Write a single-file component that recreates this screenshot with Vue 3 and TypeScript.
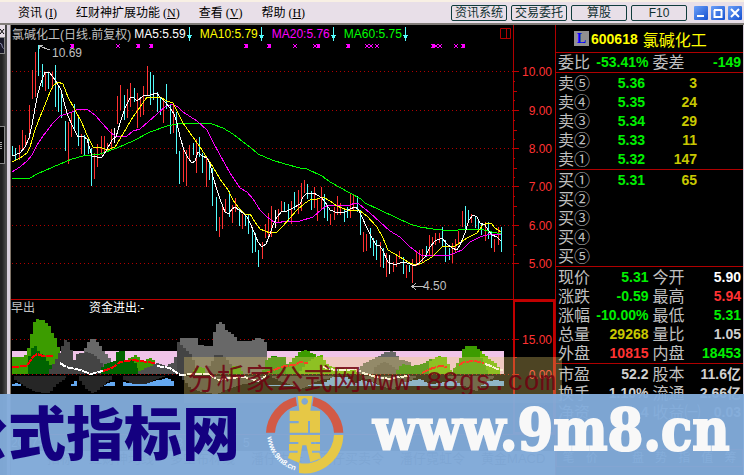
<script setup lang="ts">
type Point = [number, number]

interface Area {
  fill: string
  base: number
  points: string
}

const menus = [
  { label: '资讯', key: 'I' },
  { label: '红财神扩展功能', key: 'N' },
  { label: '查看', key: 'V' },
  { label: '帮助', key: 'H' },
]
const shortcuts = ['资讯系统', '交易委托', '算股', 'F10']

const averages = [
  { text: 'MA5:5.59', tone: 'white' },
  { text: 'MA10:5.79', tone: 'yellow' },
  { text: 'MA20:5.76', tone: 'magenta' },
  { text: 'MA60:5.75', tone: 'lime' },
]

// Price bars: x, high, low, colour (r = up, c = down, w = flat)
const barData =
  '12,146,155,c 15,148,160,c 19,145,160,r 22,130,150,r 25,135,147,r 29,105,139,r 32,70,99,r 35,52,97,r 38,45,76,c ' +
  '42,64,87,c 45,72,91,r 48,73,89,c 52,72,89,r 55,65,107,c 58,85,112,c 61,91,118,c 65,121,151,c 68,122,164,r ' +
  '71,112,137,r 74,104,130,c 78,117,146,c 81,134,154,r 84,135,156,c 88,137,154,c 91,148,186,c 94,153,179,r ' +
  '97,144,167,r 101,136,155,r 104,136,152,r 107,143,152,r 111,129,148,r 114,128,143,w 117,96,124,r 120,85,110,r ' +
  '124,95,120,c 127,89,118,r 130,83,107,r 134,88,102,c 137,93,128,r 140,97,117,r 143,86,115,r 147,66,96,r ' +
  '150,72,105,c 153,75,100,c 157,92,112,c 160,97,115,c 163,100,123,r 166,84,109,c 170,105,134,c 173,105,133,r ' +
  '176,112,154,c 179,151,184,c 183,150,182,r 186,150,186,r 189,145,160,r 193,143,155,c 196,139,173,r 199,137,157,c ' +
  '202,153,173,c 206,157,187,r 209,161,180,c 212,168,206,c 216,197,231,c 219,217,237,r 222,204,229,r 225,199,213,r ' +
  '229,191,217,c 232,205,223,r 235,198,212,r 239,209,226,c 242,214,229,r 245,214,226,c 248,215,234,c 252,228,253,c ' +
  '255,233,252,c 258,250,267,c 262,242,259,r 265,224,238,r 268,213,238,r 271,206,237,r 275,210,228,w 278,209,223,r ' +
  '281,201,212,r 284,202,212,c 288,204,222,c 291,201,224,r 294,192,210,c 298,190,214,r 301,183,211,r 304,180,193,r ' +
  '307,184,199,c 311,191,210,c 314,187,208,r 317,198,221,r 321,187,210,r 324,194,218,c 327,206,221,c 330,214,225,r ' +
  '334,207,220,r 337,196,215,r 340,203,215,r 344,210,222,c 347,207,218,c 350,193,218,r 353,195,210,r 357,196,212,c ' +
  '360,210,235,c 363,232,252,r 366,234,251,r 370,228,248,c 373,238,256,c 376,240,260,c 380,242,267,r 383,248,268,c ' +
  '386,253,277,r 389,255,274,w 393,262,272,r 396,255,267,r 399,251,259,r 403,257,274,c 406,265,278,r 409,265,272,c ' +
  '412,259,283,r 416,252,266,r 419,250,265,r 422,249,262,r 426,246,257,c 429,235,255,r 432,237,257,r 435,233,245,r ' +
  '439,233,243,r 442,227,246,c 445,240,262,c 449,248,260,c 452,243,263,r 455,239,253,r 458,231,245,r 462,211,227,r ' +
  '465,206,233,c 468,210,220,c 471,214,223,r 475,216,228,c 478,219,230,c 481,223,235,c 485,222,241,r 488,222,239,c ' +
  '491,232,248,c 494,239,252,r 498,227,245,r 501,227,252,c'

const barFill: Record<string, string> = { r: '#ff3232', c: '#54fcfc', w: '#ffffff' }
const bars = barData.split(' ').map((entry) => {
  const [x, high, low, kind] = entry.split(',')
  return { x: Number(x), high: Number(high), size: Number(low) - Number(high), fill: barFill[kind] }
})

const priceLines = [
  {
    stroke: '#00ff00',
    points:
      '12,178 25,179 30,178 37,174 53,167 72,159 83,156 100,154 117,148 133,141 150,132 167,126 182,123 200,123 212,124 223,128 233,134 247,145 250,147 258,154 272,160 285,164 300,168 307,169 322,176 330,182 350,193 361,199 365,203 380,210 397,218 410,224 420,227 433,229 450,231 467,229 480,229 488,231 501,234',
  },
  {
    stroke: '#ff00ff',
    points:
      '12,172 20,167 27,161 32,155 37,145 43,136 53,123 60,116 72,112 78,109 87,109 95,115 102,123 110,132 115,136 126,137 133,131 140,129 148,122 157,114 165,107 172,104 178,107 183,112 197,121 207,130 213,142 220,155 230,173 240,188 247,192 253,199 260,210 267,217 274,222 278,223 285,221 300,221 313,217 322,209 328,205 350,205 355,203 359,204 370,213 380,222 390,231 400,237 410,247 417,252 422,256 450,255 462,250 470,242 480,237 490,234 501,234',
  },
  {
    stroke: '#ffff00',
    points:
      '12,162 20,158 27,153 30,147 35,130 40,117 45,105 50,92 53,86 58,82 63,84 68,97 75,110 82,123 87,135 93,147 100,147 107,150 115,147 120,139 127,127 133,117 140,107 147,97 160,97 167,101 173,103 178,113 183,123 190,133 200,147 207,158 213,167 220,179 228,190 233,200 238,207 245,214 250,214 255,222 260,229 270,233 277,232 283,226 290,218 297,210 305,203 310,200 317,199 323,197 330,201 337,206 347,210 360,211 367,216 377,227 383,238 388,250 393,253 400,257 408,262 415,265 422,263 432,257 442,247 455,246 467,238 477,233 483,225 488,223 492,224 495,228 501,232',
  },
  {
    stroke: '#ffffff',
    points:
      '12,156 20,153 25,147 29,138 32,125 35,108 38,93 42,80 45,72 50,73 53,77 57,83 61,90 64,102 68,116 73,127 78,137 83,136 87,139 92,156 97,157 102,157 106,151 112,140 116,137 120,123 125,108 130,98 133,97 137,101 143,96 150,95 157,93 160,97 165,102 170,108 174,114 177,123 180,137 184,150 188,158 192,163 195,161 198,152 202,156 207,158 210,164 213,177 217,190 220,199 225,212 229,214 232,209 235,207 239,210 243,213 247,217 250,223 254,232 258,242 262,247 266,244 270,234 273,225 277,217 282,211 287,211 293,208 300,204 303,197 307,193 314,193 317,195 322,198 327,205 330,210 338,213 345,212 350,209 355,207 358,209 362,217 367,228 372,238 376,245 380,246 383,251 388,262 395,265 402,262 407,263 415,266 419,263 425,257 430,247 435,241 442,238 447,244 452,248 457,250 460,245 465,233 469,220 473,215 477,217 480,223 485,225 488,230 492,235 497,237 501,241',
  },
]

const signals: [number, boolean][] = [
  [72, true], [118, false], [138, true], [151, true], [246, true], [269, true], [295, false], [315, false],
  [318, true], [348, true], [367, false], [371, false], [377, false], [433, true], [436, false], [440, false],
  [456, false], [463, true],
]

const gridLevels = [
  { y: 71, label: '10.00' },
  { y: 110, label: '9.00' },
  { y: 148, label: '8.00' },
  { y: 186, label: '7.00' },
  { y: 225, label: '6.00' },
  { y: 263, label: '5.00' },
]
const minorTicks = gridLevels.slice(0, 5).flatMap(({ y }) => [
  { y: y + 10, size: 2 },
  { y: y + 20, size: 4 },
  { y: y + 29, size: 2 },
])

const areas: Area[] = [
  { fill: '#3c9c00', base: 374, points: '12,357 20,357 24,355 28,345 30,334 33,322 36,319 42,320 48,326 50,331 55,340 58,350 61,357' },
  { fill: '#006400', base: 374, points: '25,374 27,358 31,348 34,346 38,352 43,357 50,366 54,374' },
  { fill: '#686868', base: 374, points: '75,360 81,353 84,348 88,340 92,338 97,343 103,352 108,358 112,374' },
  { fill: '#444444', base: 374, points: '46,374 52,364 57,355 60,349 63,341 65,339 69,344 72,362 76,354 84,352 90,353 96,357 102,366 110,374' },
  { fill: '#3c9c00', base: 374, points: '122,362 130,357 134,355 139,359 143,361 148,357 153,361 157,374' },
  { fill: '#006400', base: 374, points: '98,374 102,365 113,361 115,352 122,351 124,360 132,360 138,370' },
  { fill: '#505050', base: 374, points: '138,371 156,363 165,366 172,362 175,355 178,341 190,350 200,374' },
  { fill: '#686868', base: 374, points: '180,338 195,338 196,345 210,346 212,336 214,328 217,322 221,322 224,329 233,335 236,341 250,341 254,338 260,338 264,342 266,350 268,374' },
  { fill: '#444444', base: 374, points: '177,342 181,346 185,350 190,355 195,368 200,374' },
  { fill: '#444444', base: 374, points: '208,366 214,355 221,355 228,362 235,374' },
  { fill: '#3c9c00', base: 374, points: '190,374 195,367 201,367 206,374' },
  { fill: '#3c9c00', base: 374, points: '226,374 232,366 238,366 243,374' },
  { fill: '#228800', base: 374, points: '262,370 265,360 270,356 283,357 289,370' },
  { fill: '#3c9c00', base: 374, points: '286,367 291,359 296,355 299,351 305,350 310,353 316,354' },
  { fill: '#60b800', base: 374, points: '299,371 304,364 312,358 321,355 325,364 334,368 352,369 358,374' },
  { fill: '#686868', base: 374, points: '357,369 363,363 373,358 380,355 384,352 390,351 395,353 397,359 408,362 418,374' },
  { fill: '#555555', base: 374, points: '374,367 384,361 396,370 402,374' },
  { fill: '#228800', base: 374, points: '396,370 400,364 412,366 423,363 430,358 440,361 452,374' },
  { fill: '#60b800', base: 374, points: '429,361 437,356 444,357 448,366 452,374' },
  { fill: '#60b800', base: 374, points: '455,367 464,357 478,350 486,357 494,363 500,370' },
  { fill: '#3c9c00', base: 374, points: '450,372 456,363 460,356 461,350 464,346 476,346 479,355 482,363 488,374' },
  { fill: '#64a8f0', base: 386, points: '12,384 17,383 21,386' },
  { fill: '#64a8f0', base: 386, points: '71,384 75,380 77,386' },
  { fill: '#64a8f0', base: 386, points: '101,386 108,382 115,382' },
  { fill: '#64a8f0', base: 386, points: '123,382 135,384 147,382 157,380 166,378 174,383' },
  { fill: '#64a8f0', base: 386, points: '267,385 285,385 305,384 322,384 330,377 345,377 354,384' },
  { fill: '#64a8f0', base: 386, points: '352,384 360,380 378,384 400,383 418,379 430,384 456,380 470,384 494,380 504,381' },
  { fill: '#262626', base: 376, points: '14,380 20,384 30,390 40,393 48,393 55,385 66,377' },
  { fill: '#262626', base: 376, points: '76,376 84,388 92,394 99,388 112,377' },
  { fill: '#262626', base: 376, points: '123,380 132,384 145,384 156,379 166,376' },
  { fill: '#3a3a3a', base: 376, points: '182,380 190,389 202,392 215,394 230,388 250,382 266,378' },
  { fill: '#3a3a3a', base: 376, points: '272,378 286,384 300,389 318,380 334,377' },
  { fill: '#3a3a3a', base: 376, points: '362,378 380,386 392,389 404,382 416,377' },
  { fill: '#3a3a3a', base: 376, points: '448,378 462,386 476,391 484,382 494,377' },
]

const flowLines = [
  { stroke: '#ff0000', points: '12,367 27,366 32,358 37,354 43,356 54,356' },
  { stroke: '#ffffff', points: '60,363 66,367 80,370 91,374 98,372 103,371' },
  { stroke: '#ff0000', points: '103,371 112,368 120,362 133,360 140,361 155,363' },
  { stroke: '#ffffff', points: '157,366 170,368 180,375 195,374 208,374 219,380 229,378 244,377 258,381 266,376' },
  { stroke: '#ff0000', points: '266,373 276,369 285,366 295,365 300,362 308,363' },
  { stroke: '#ffffff', points: '323,367 335,370 345,370 356,369 363,373 376,377 390,379 398,377 410,376' },
  { stroke: '#ff0000', points: '422,373 430,369 440,366 447,367' },
  { stroke: '#ff0000', points: '459,365 464,362 475,361 484,363' },
  { stroke: '#ffffff', points: '485,364 491,366 497,369 503,370' },
]

function parse(points: string): Point[] {
  return points.split(' ').map((p) => p.split(',').map(Number) as Point)
}

// Turns a profile into the stair-stepped outline of a daily histogram.
function terrace(area: Area): string {
  const pts = parse(area.points)
  const last = pts[pts.length - 1][0]
  let d = `M${pts[0][0]} ${area.base}`
  for (let x = pts[0][0]; x < last; x += 3) {
    const i = Math.max(1, pts.findIndex((p) => p[0] > x))
    const [x0, y0] = pts[i - 1]
    const [x1, y1] = pts[i]
    const y = Math.round(y0 + ((y1 - y0) * (x - x0)) / (x1 - x0))
    d += `V${y}H${Math.min(x + 3, last)}`
  }
  return `${d}V${area.base}Z`
}

const summary = [
  ['委比', '-53.41%', 'green', '委差', '-149', 'green'],
]
const asks = [
  ['卖⑤', '5.36', '3'],
  ['卖④', '5.35', '24'],
  ['卖③', '5.34', '29'],
  ['卖②', '5.33', '11'],
  ['卖①', '5.32', '147'],
]
const bids = [
  ['买①', '5.31', '65'],
  ['买②', '', ''],
  ['买③', '', ''],
  ['买④', '', ''],
  ['买⑤', '', ''],
]
const session = [
  ['现价', '5.31', 'green', '今开', '5.90', 'white'],
  ['涨跌', '-0.59', 'green', '最高', '5.94', 'red'],
  ['涨幅', '-10.00%', 'green', '最低', '5.31', 'green'],
  ['总量', '29268', 'gold', '量比', '1.05', 'silver'],
  ['外盘', '10815', 'red', '内盘', '18453', 'green'],
]
const fundamentals = [
  ['市盈', '52.2', 'silver', '股本', '11.6亿', 'silver'],
  ['换手', '1.10%', 'silver', '流通', '2.66亿', 'silver'],
  ['净资', '2.4', 'silver', '收益㈠', '0.03', 'silver'],
]
const quoteBlocks = [
  { name: 'summary', rows: summary },
  { name: 'asks', rows: asks },
  { name: 'bids', rows: bids },
  { name: 'session', rows: session },
  { name: 'fundamentals', rows: fundamentals },
]
const quoteTabs = ['笔', '价', '', '盘', '势', '指', '值', '筹']
const chartTabs = ['指标', '红财神均线', '多空布林线', '潘仔牛卡', '潘仔买卖令', '潘仔霓虹令', '黄金MACD']
</script>

<template>
  <div class="app">
    <header class="menubar">
      <nav class="menus">
        <button v-for="m in menus" :key="m.key" type="button" class="menu">
          {{ m.label }}<span class="mnemonic">(<u>{{ m.key }}</u>)</span>
        </button>
      </nav>
      <div class="shortcuts">
        <button v-for="s in shortcuts" :key="s" type="button" class="shortcut">{{ s }}</button>
      </div>
      <div class="window-buttons">
        <button type="button" class="win" aria-label="最小化">
          <svg viewBox="0 0 14 14"><path d="M3 10h7" /></svg>
        </button>
        <button type="button" class="win" aria-label="还原">
          <svg viewBox="0 0 14 14"><path d="M3 4h8M3.500 4v7h7V4" /></svg>
        </button>
        <button type="button" class="win" aria-label="关闭">
          <svg viewBox="0 0 14 14"><path d="M3 3l8 8M11 3l-8 8" /></svg>
        </button>
      </div>
    </header>

    <main class="workspace">
      <aside class="rail">
        <button type="button" class="rail-close" aria-label="关闭侧栏">
          <svg viewBox="0 0 5 12"><path d="M0 4l4 5M4 4l-4 5" /></svg>
        </button>
        <button type="button" class="rail-tool" aria-label="画线">
          <svg viewBox="0 0 5 15"><path d="M0 4l2 1l1 4l2 2" /></svg>
        </button>
        <div class="rail-grip"><i></i><i></i><i></i><i></i></div>
      </aside>

      <section class="charts">
        <div class="pane">
          <div class="plot">
            <div class="plot-title">
              <span class="stock">氯碱化工(日线.前复权)</span>
              <span v-for="a in averages" :key="a.text" class="average" :class="a.tone">
                {{ a.text }}<svg class="down" viewBox="0 0 5 14"><path d="M2 0h1v8h2v1h-1v2h-1v3h-1v-3h-1v-2h-1v-1h2z" /></svg>
              </span>
              <svg class="split" viewBox="0 0 11 11"><path d="M.5.5h10v10h-10zM6.500.5v10" /></svg>
            </div>
            <svg class="price" viewBox="11 42 502 257" preserveAspectRatio="xMinYMin meet">
              <g class="dots">
                <path v-for="g in gridLevels" :key="g.label" :d="`M12 ${g.y}.500H513`" />
              </g>
              <rect v-for="b in bars" :key="b.x" :x="b.x" :y="b.high" width="1" :height="b.size" :fill="b.fill" />
              <g class="curves">
                <polyline v-for="l in priceLines" :key="l.stroke" :points="l.points" :stroke="l.stroke" />
              </g>
              <g v-for="[x, strong] in signals" :key="x">
                <path class="signal" :d="`M${x - 2} 44l4 4M${x + 2} 44l-4 4`" />
                <rect v-if="strong" class="signal-core" :x="x - 1" y="44" width="3" height="4" />
              </g>
              <path class="pointer" d="M50 50L39 46M43 45h-4v4" />
              <text class="mark" x="52" y="57">10.69</text>
              <path class="pointer" d="M424 286.500H412M416 283l-4 3.500l4 3.500" />
              <text class="mark" x="423" y="290">4.50</text>
            </svg>
          </div>
          <svg class="scale" viewBox="513 25 42 274">
            <path v-for="t in minorTicks" :key="t.y" class="tick" :d="`M513 ${t.y}.500h${t.size}`" />
            <g v-for="g in gridLevels" :key="g.label">
              <path class="tick" :d="`M513 ${g.y}.500h6`" />
              <text class="scale-label" x="552" :y="g.y + 5">{{ g.label }}</text>
            </g>
          </svg>
        </div>

        <div class="pane flow-pane">
          <div class="flow">
            <div class="flow-title"><span class="early">早出</span><span>资金进出:-</span></div>
            <svg class="flow-plot" viewBox="11 316 502 118" preserveAspectRatio="xMinYMin meet">
              <g class="dots"><path d="M12 339.500H513M12 374.500H513" /></g>
              <rect x="12" y="351" width="492" height="23" fill="#f0c4e8" />
              <path v-for="a in areas" :key="a.points" :d="terrace(a)" :fill="a.fill" />
              <g class="flow-curves">
                <polyline v-for="l in flowLines" :key="l.points" :points="l.points" :stroke="l.stroke" />
              </g>
            </svg>
          </div>
          <svg class="flow-scale" viewBox="513 300 42 134">
            <path class="tick" d="M513 339.500h6M513 374.500h6M513 357.500h4" />
            <text class="scale-label" x="552" y="344">15.00</text>
            <text class="scale-label" x="552" y="379">0.00</text>
          </svg>
          <div class="stamp"><span>分析家公式网</span><span class="stamp-url">www.88gs.com</span></div>
        </div>

        <div class="dates"><span>2007年</span><span>2</span><span>3</span><span>5</span><span>6</span></div>
        <nav class="chart-tabs"><a v-for="t in chartTabs" :key="t" href="#">{{ t }}</a></nav>
      </section>

      <section class="quote">
        <h1 class="quote-title"><span class="flag">L</span><b>600618</b><span class="name">氯碱化工</span></h1>
        <table v-for="block in quoteBlocks" :key="block.name" class="block" :class="block.name">
          <tbody>
            <tr v-for="row in block.rows" :key="row[0]">
              <th scope="row">{{ row[0] }}</th>
              <template v-if="row.length === 3">
                <td class="green">{{ row[1] }}</td>
                <td class="gold volume" colspan="2"><span>{{ row[2] }}</span></td>
              </template>
              <template v-else>
                <td :class="row[2]">{{ row[1] }}</td>
                <th scope="row" class="second">{{ row[3] }}</th>
                <td :class="row[5]">{{ row[4] }}</td>
              </template>
            </tr>
          </tbody>
        </table>
        <nav class="quote-tabs"><a v-for="(t, i) in quoteTabs" :key="i" href="#">{{ t }}</a></nav>
      </section>
    </main>

    <footer class="banner">
      <span class="site-name">公式指标网</span>
      <svg class="logo" viewBox="45 30 240 240" role="img" aria-label="www.9m8.cn">
        <path d="M48 143A116 116 0 0 1 137 36L141 62A90 90 0 0 0 75 143Z" fill="#d25a46" />
        <path d="M191 36A116 116 0 0 1 280 143H252A90 90 0 0 0 187 62Z" fill="#d25a46" />
        <path d="M280 150A116 116 0 0 1 147 264V234A88 88 0 0 0 252 150Z" fill="#e6c846" />
        <path
          fill="#e6c846"
          fill-rule="evenodd"
          d="M143 33H187L181 77H210V143H180V108H174V143H119V115H146V108H119V77H148ZM164 39a10 10 0 1 0 .1 0Z"
        />
        <path fill="#e6c846" d="M119 150H210V171H183V177H210V197H186V203H208L213 220L181 232L169 181H157L148 234L114 219L119 203H143V197H117V177H145V171H119Z" />
        <path id="logo-arc" d="M52 156A114 114 0 0 0 142 258" fill="none" />
        <text class="logo-text"><textPath href="#logo-arc">www.9m8.cn</textPath></text>
      </svg>
      <span class="site-url">www.9m8.cn</span>
    </footer>
  </div>
</template>

<style>
body {
  background: #000;
}
</style>

<style scoped>
.app {
  position: relative;
  display: flex;
  flex-direction: column;
  height: 100vh;
  overflow: hidden;
  background: #000;
  font-family: 'Liberation Sans', 'Noto Sans CJK SC', sans-serif;
  font-size: 12px;
}
button {
  margin: 0;
  padding: 0;
  border: 0;
  background: none;
  font: inherit;
  color: inherit;
}
a {
  color: inherit;
  text-decoration: none;
}
.menubar {
  display: flex;
  flex: none;
  align-items: center;
  box-sizing: border-box;
  height: 25px;
  padding: 0 2px 0 18px;
  border-top: 2px solid #f8f0e4;
  border-bottom: 2px solid #807c78;
  background: #e8dfe8;
  color: #000;
}
.menus {
  display: flex;
  gap: 19px;
  margin-right: auto;
}
.menu {
  line-height: 20px;
}
.mnemonic {
  padding-left: 3px;
  font-family: 'Liberation Serif', serif;
}
.shortcuts {
  display: flex;
  gap: 4px;
  margin-right: 7px;
}
.shortcut {
  box-sizing: border-box;
  width: 56px;
  height: 16px;
  border: 1px solid #103c3c;
  border-radius: 2px;
  color: #103030;
  line-height: 14px;
  white-space: nowrap;
}
.window-buttons {
  display: flex;
  gap: 3px;
}
.win {
  width: 14px;
  height: 14px;
  border-radius: 1px;
  background: linear-gradient(135deg, #6ca0f8, #1450d0);
}
.win svg {
  display: block;
  fill: none;
  stroke: #fff;
  stroke-width: 2;
}
.workspace {
  display: grid;
  flex: 1;
  grid-template-columns: 11px 1fr 189px;
}
.rail {
  display: flex;
  flex-direction: column;
  border-right: 1px solid #807468;
  box-shadow: inset -3px 0 #d8d0dc;
  background: linear-gradient(90deg, #222 2px, #4a4a4a 6px);
}
.rail-close {
  width: 5px;
  height: 12px;
  background: #e8dfe8;
}
.rail svg {
  display: block;
  width: 100%;
  fill: none;
}
.rail-close svg {
  stroke: #000;
}
.rail-tool {
  box-sizing: border-box;
  width: 5px;
  height: 17px;
  border: 1px solid #888;
  border-left: 0;
  background: #181828;
}
.rail-tool svg {
  stroke: #a8a8d0;
}
.rail-grip {
  display: flex;
  flex-direction: column;
  justify-content: center;
  gap: 1px;
  box-sizing: border-box;
  width: 5px;
  height: 38px;
  margin-top: 72px;
  border: 1px solid #888;
  border-left: 0;
  background: #080808;
}
.rail-grip i {
  width: 2px;
  height: 1px;
  background: #aaa;
}
.charts {
  min-width: 0;
}
.pane {
  position: relative;
  display: flex;
}
.plot,
.flow {
  flex: 1;
  min-width: 0;
}
.plot svg,
.flow svg,
.scale,
.flow-scale {
  display: block;
}
.plot-title {
  display: flex;
  align-items: center;
  gap: 8px;
  height: 17px;
  padding-left: 1px;
  white-space: nowrap;
}
.stock {
  margin-right: -5px;
  color: #c0c0c0;
}
.average {
  display: flex;
  align-items: center;
  gap: 1px;
}
.down {
  width: 5px;
  height: 14px;
  fill: #54fcfc;
}
.split {
  width: 11px;
  height: 11px;
  margin: 0 2px 0 auto;
  fill: none;
  stroke: #b00000;
}
.white {
  color: #fff;
}
.yellow {
  color: #ff0;
}
.magenta {
  color: #f0f;
}
.lime {
  color: #0f0;
}
.price {
  width: 100%;
  height: 257px;
  shape-rendering: crispEdges;
}
.dots {
  stroke: #b00000;
  stroke-dasharray: 1 3;
  shape-rendering: crispEdges;
}
.curves,
.flow-curves {
  fill: none;
}
.flow-curves {
  stroke-width: 2;
  stroke-dasharray: 7 1;
}
.signal {
  stroke: #f0f;
}
.signal-core {
  fill: #f0f;
}
.pointer {
  fill: none;
  stroke: #c0c0c0;
}
.mark {
  fill: #c0c0c0;
  font-size: 12px;
}
.scale,
.flow-scale {
  flex: none;
  box-sizing: border-box;
  width: 42px;
  overflow: visible;
}
.scale {
  height: 274px;
  box-shadow: inset 1px 0 #b00000;
}
.tick {
  stroke: #c00000;
}
.scale-label {
  fill: #ff3232;
  font-size: 12px;
  text-anchor: end;
}
.flow-pane {
  border-top: 1px solid #c00000;
}
.flow-title {
  display: flex;
  gap: 54px;
  height: 16px;
  color: #fff;
  line-height: 16px;
}
.early {
  color: #c0c0c0;
}
.flow-plot {
  width: 100%;
  height: 118px;
  shape-rendering: crispEdges;
}
.flow-scale {
  height: 134px;
  box-shadow: inset 0 0 0 2px #c00000;
}
.stamp {
  position: absolute;
  top: 57px;
  right: -7px;
  display: flex;
  align-items: baseline;
  padding: 0 6px 0 4px;
  background: rgba(238, 210, 110, 0.32);
  color: rgba(112, 0, 16, 0.85);
  font: 29px/40px 'Noto Sans CJK SC', sans-serif;
  white-space: nowrap;
}
.stamp-url {
  font: 27px/40px 'Liberation Mono', monospace;
}
.dates {
  display: flex;
  gap: 60px;
  height: 16px;
  border-top: 1px solid #c00000;
  color: #c0c0c0;
  line-height: 16px;
}
.chart-tabs {
  display: flex;
  gap: 16px;
  height: 24px;
  padding-left: 36px;
  background: #b8b0b8;
  color: #222;
  font-size: 13px;
  line-height: 16px;
  white-space: nowrap;
}
.quote {
  border-left: 1px solid #b00000;
  border-right: 1px solid #d8d0dc;
}
.quote-title {
  display: flex;
  align-items: center;
  height: 27px;
  margin: 0;
  padding-left: 18px;
  color: #ff0;
  font-size: 14px;
  font-weight: normal;
}
.flag {
  width: 15px;
  height: 15px;
  margin-right: 2px;
  background: #909090;
  color: #00f;
  font: bold 14px/15px 'Liberation Serif', serif;
  text-align: center;
}
.name {
  margin-left: 5px;
  font-size: 16px;
}
.block {
  width: 100%;
  border-spacing: 0;
  border-top: 1px solid #b00000;
  table-layout: fixed;
}
.asks,
.bids,
.session,
.fundamentals {
  padding-top: 1px;
}
.block tr {
  height: 19px;
}
.block th {
  width: 32px;
  padding: 0 0 0 2px;
  color: #c0c0c0;
  font-size: 16px;
  font-weight: normal;
  line-height: 19px;
  text-align: left;
  white-space: nowrap;
}
.block .second {
  padding-left: 4px;
}
.block td {
  padding: 0;
  font-size: 14px;
  font-weight: bold;
  line-height: 19px;
  text-align: right;
  white-space: nowrap;
}
.block tr td:last-child {
  padding-right: 2px;
}
.block tr .volume {
  width: 96px;
  padding-right: 0;
}
.volume span {
  display: block;
  margin-right: 44px;
}
.green {
  color: #00f000;
}
.gold {
  color: #c8c800;
}
.red {
  color: #ff3232;
}
.silver {
  color: #d0d0d0;
}
.quote-tabs {
  display: grid;
  grid-template-columns: repeat(8, 1fr);
  height: 16px;
  margin-top: 27px;
  border: 1px solid #b00000;
  color: #c0c0c0;
  line-height: 16px;
  text-align: center;
}
.banner {
  position: absolute;
  right: 0;
  bottom: 0;
  left: 0;
  display: flex;
  align-items: center;
  height: 81px;
  overflow: hidden;
  background: rgba(130, 172, 219, 0.96);
  white-space: nowrap;
}
.site-name {
  padding-bottom: 10px;
  margin-left: -50px;
  color: #140080;
  font: 900 58px/72px 'Noto Sans CJK SC', sans-serif;
}
.logo {
  flex: none;
  width: 80px;
  height: 80px;
  margin-left: 25px;
}
.logo-text {
  fill: #fff;
  font-size: 23px;
  font-weight: bold;
}
.site-url {
  padding-bottom: 10px;
  margin-left: 28px;
  color: #f8f8f8;
  font: bold 57px/72px 'DejaVu Serif Condensed', 'DejaVu Serif', serif;
  -webkit-text-stroke: 2px #f8f8f8;
}
</style>
